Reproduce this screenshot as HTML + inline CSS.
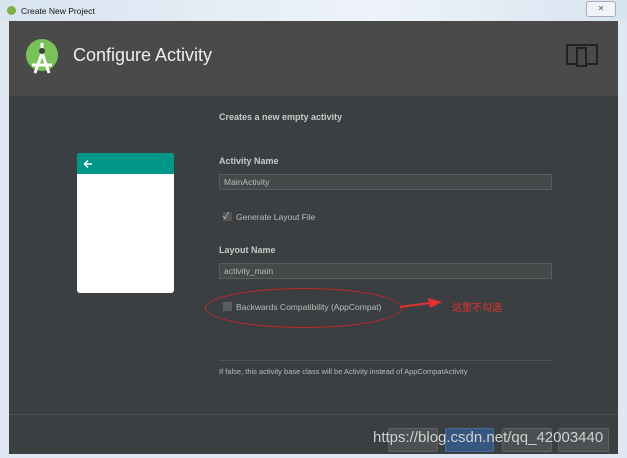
<!DOCTYPE html>
<html><head><meta charset="utf-8"><style>
body{margin:0;width:627px;height:458px;overflow:hidden;background:#dfe8f2;font-family:"Liberation Sans","Noto Sans CJK SC",sans-serif;position:relative}
.a{position:absolute}
.lbl{color:#c8c8c8;font-size:9px;font-weight:bold}
.inp{background:#45494a;border:1px solid #5a5d5f;color:#bbb;font-size:8.5px;line-height:14px;padding-left:4px;box-sizing:border-box}
.btn{background:#4c5052;border:1px solid #5e6163;border-radius:2px;height:22px;top:428px}
</style></head><body>
<div class="a" style="left:0;top:0;width:627px;height:22px;background:linear-gradient(90deg,#d8e4f0,#eef3f9 60%,#d8e4f0)"></div>
<div class="a" style="left:7px;top:6px;width:9px;height:9px;border-radius:50%;background:#7cb342"></div>
<div class="a" style="left:21px;top:6px;font-size:8.5px;color:#111">Create New Project</div>
<div class="a" style="left:586px;top:1px;width:28px;height:14px;border:1px solid #aab;border-radius:3px;background:#f0f3f7;font-size:8px;color:#666;text-align:center;line-height:14px">✕</div>
<div class="a" style="left:9px;top:21px;width:609px;height:75px;background:#4a4a4a"></div>
<svg class="a" style="left:22px;top:35px" width="40" height="42" viewBox="0 0 40 42"><circle cx="20" cy="20" r="16" fill="#78c257"/><path d="M20 8v8M13 38l7-20 7 20M10 30h20" stroke="#fff" stroke-width="3" fill="none"/><circle cx="20" cy="16" r="3" fill="#3d3d3d"/></svg>
<div class="a" style="left:73px;top:45px;font-size:18px;color:#eee">Configure Activity</div>
<div class="a" style="left:566px;top:44px;width:32px;height:21px;border:2px solid #222;box-sizing:border-box"></div>
<div class="a" style="left:576px;top:47px;width:11px;height:20px;border:2px solid #222;box-sizing:border-box;background:#4a4a4a"></div>
<div class="a" style="left:9px;top:96px;width:609px;height:358px;background:#3c3f41"></div>
<div class="a" style="left:9px;top:414px;width:609px;height:1px;background:#4f5254"></div>
<div class="a" style="left:77px;top:153px;width:97px;height:140px;background:#fff;border-radius:3px;overflow:hidden"><div style="height:21px;background:#009688;position:relative"><svg style="position:absolute;left:6px;top:6px" width="10" height="10" viewBox="0 0 10 10"><path d="M9 5H1.5M5 1.5L1.5 5 5 8.5" stroke="#fff" stroke-width="1.5" fill="none"/></svg></div></div>
<div class="a lbl" style="left:219px;top:112px">Creates a new empty activity</div>
<div class="a lbl" style="left:219px;top:156px">Activity Name</div>
<div class="a inp" style="left:219px;top:174px;width:333px;height:16px">MainActivity</div>
<div class="a" style="left:223px;top:212px;width:9px;height:9px;background:#555;color:#ccc;font-size:9px;line-height:8px">✓</div>
<div class="a" style="left:236px;top:212px;font-size:8.5px;color:#bbb">Generate Layout File</div>
<div class="a lbl" style="left:219px;top:245px">Layout Name</div>
<div class="a inp" style="left:219px;top:263px;width:333px;height:16px">activity_main</div>
<div class="a" style="left:223px;top:302px;width:9px;height:9px;background:#5a5d5f"></div>
<div class="a" style="left:236px;top:302px;font-size:8.5px;color:#bbb">Backwards Compatibility (AppCompat)</div>
<div class="a" style="left:205px;top:288px;width:195px;height:38px;border:1px solid #c0282a;border-radius:50%"></div>
<svg class="a" style="left:400px;top:296px" width="45" height="16"><path d="M0 11L30 7" stroke="#e53030" stroke-width="2"/><path d="M28 2L42 6 30 12z" fill="#e53030"/></svg>
<div class="a" style="left:452px;top:299px;font-size:10px;color:#e53030">这里不勾选</div>
<div class="a" style="left:219px;top:360px;width:333px;height:1px;background:#4f5254"></div>
<div class="a" style="left:219px;top:367px;font-size:7.5px;color:#bbb">If false, this activity base class will be Activity instead of AppCompatActivity</div>
<div class="a btn" style="left:388px;width:48px"></div>
<div class="a btn" style="left:445px;width:47px;background:#365880;border-color:#4a6c94"></div>
<div class="a btn" style="left:502px;width:48px"></div>
<div class="a btn" style="left:558px;width:49px"></div>
<div class="a" style="left:373px;top:429px;font-size:15px;color:#d0d0d0">https://blog.csdn.net/qq_42003440</div>
</body></html>
